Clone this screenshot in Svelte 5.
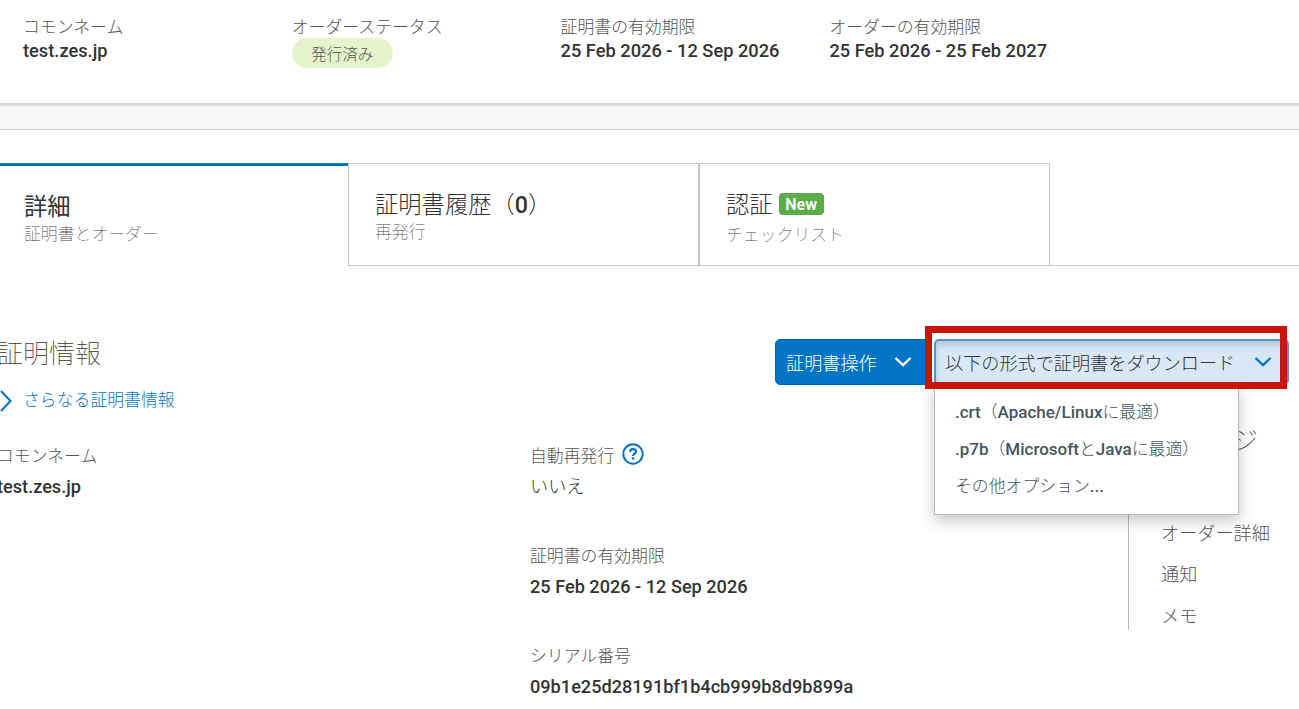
<script lang="ts">
	let menuOpen = $state(true);
	let activeTab = $state('details');

	const commonName = 'test.zes.jp';
	const certValidity = '25 Feb 2026 - 12 Sep 2026';
	const orderValidity = '25 Feb 2026 - 25 Feb 2027';
	const serial = '09b1e25d28191bf1b4cb999b8d9b899a';

	const pageLinks = ['オーダー詳細', '通知', 'メモ'];
</script>

{#snippet chevron()}
	<svg class="chevron" viewBox="0 0 18 12" width="18" height="12" aria-hidden="true">
		<path d="M1.5 2 L9 9.2 L16.5 2" fill="none" stroke="currentColor" stroke-width="2.4" />
	</svg>
{/snippet}

<div class="page">
	<header class="summary">
		<div class="summary-item">
			<span class="summary-label">コモンネーム</span>
			<strong>{commonName}</strong>
		</div>
		<div class="summary-item">
			<span class="summary-label">オーダーステータス</span>
			<span class="status">発行済み</span>
		</div>
		<div class="summary-item">
			<span class="summary-label">証明書の有効期限</span>
			<strong>{certValidity}</strong>
		</div>
		<div class="summary-item">
			<span class="summary-label">オーダーの有効期限</span>
			<strong>{orderValidity}</strong>
		</div>
	</header>
	<div class="band"></div>

	<nav class="tabs">
		<button class="tab first" class:active={activeTab === 'details'} onclick={() => (activeTab = 'details')}>
			<span class="tab-title">詳細</span>
			<span class="tab-sub">証明書とオーダー</span>
		</button>
		<button class="tab" class:active={activeTab === 'history'} onclick={() => (activeTab = 'history')}>
			<span class="tab-title">証明書履歴（<b>0</b>）</span>
			<span class="tab-sub">再発行</span>
		</button>
		<button class="tab last" class:active={activeTab === 'validation'} onclick={() => (activeTab = 'validation')}>
			<span class="tab-title">認証<span class="badge">New</span></span>
			<span class="tab-sub">チェックリスト</span>
		</button>
		<div class="tabs-rest"></div>
	</nav>

	<main class="content">
		<section class="details">
			<div class="details-head">
				<h2>証明情報</h2>
				<div class="actions">
					<button class="btn btn-primary">証明書操作{@render chevron()}</button>
					<div class="download">
						<button class="btn btn-download" onclick={() => (menuOpen = !menuOpen)}>
							以下の形式で証明書をダウンロード{@render chevron()}
						</button>
						{#if menuOpen}
							<ul class="menu">
								<li><b>.crt</b>（<b>Apache/Linux</b>に最適）</li>
								<li><b>.p7b</b>（<b>Microsoft</b>と<b>Java</b>に最適）</li>
								<li>その他オプション<b>...</b></li>
							</ul>
						{/if}
						<div class="highlight"></div>
					</div>
				</div>
			</div>

			<a class="more" href="#more">
				<svg viewBox="0 0 14 22" width="14" height="22" aria-hidden="true">
					<path d="M2 1 L11.5 11 L2 21" fill="none" stroke="currentColor" stroke-width="2" />
				</svg>
				さらなる証明書情報
			</a>

			<div class="fields">
				<dl>
					<dt>コモンネーム</dt>
					<dd>{commonName}</dd>
				</dl>
				<dl>
					<dt>
						自動再発行
						<svg class="help" viewBox="0 0 22 22" width="22" height="22" aria-hidden="true">
							<circle cx="11" cy="11" r="9.7" fill="none" stroke="currentColor" stroke-width="2" />
							<path d="M7.9 8.7 C7.9 5.2 14.1 5.2 14.1 8.5 C14.1 10.6 11.1 10.6 11.1 13" fill="none" stroke="currentColor" stroke-width="2.2" />
							<circle cx="11.1" cy="15.5" r="1.35" fill="currentColor" />
						</svg>
					</dt>
					<dd class="jp">いいえ</dd>
					<dt>証明書の有効期限</dt>
					<dd>{certValidity}</dd>
					<dt>シリアル番号</dt>
					<dd>{serial}</dd>
				</dl>
			</div>
		</section>

		<aside class="sidebar">
			<h3>ジ</h3>
			<ul class="page-links">
				{#each pageLinks as link}
					<li>{link}</li>
				{/each}
			</ul>
		</aside>
	</main>
</div>

<style>
	:global(body) {
		background: #fff;
		overflow: hidden;
	}

	.page {
		width: 1299px;
		height: 709px;
		overflow: hidden;
		font-family: Roboto, 'Noto Sans CJK JP', sans-serif;
		font-weight: 300;
		font-size: 16.85px;
		color: #333;
	}

	button {
		font: inherit;
		color: inherit;
		cursor: pointer;
	}

	ul,
	dl,
	dd,
	h2,
	h3 {
		margin: 0;
		padding: 0;
		list-style: none;
		font-weight: 300;
	}

	.summary {
		display: grid;
		grid-template-columns: repeat(4, 268.8px);
		box-sizing: border-box;
		height: 103px;
		padding: 15px 0 0 23px;
	}

	.summary-item {
		display: flex;
		flex-direction: column;
		align-items: flex-start;
		line-height: 24px;
	}

	.summary-label {
		color: #555;
	}

	.summary strong {
		font-size: 18.25px;
		font-weight: 500;
	}

	.status {
		box-sizing: border-box;
		width: 101px;
		height: 30px;
		margin-top: -1px;
		border-radius: 15px;
		background: #e6f4cb;
		color: #555;
		font-size: 15.5px;
		line-height: 34px;
		text-align: center;
	}

	.band {
		height: 26px;
		border-bottom: 1px solid #ccc;
		background: linear-gradient(#d5d5d5 0, #dcdcdc 2px, #f9f9f9 4px);
	}

	.tabs {
		display: flex;
		height: 103px;
		margin-top: 33px;
	}

	.tab {
		display: flex;
		flex-direction: column;
		box-sizing: border-box;
		width: 351px;
		padding: 27px 26px 0;
		border: 1px solid #c8c8c8;
		background: #fff;
		text-align: left;
	}

	.tab.first {
		width: 348px;
		padding: 27px 24px 0;
		border: 0;
		border-top: 3px solid #0174c3;
	}

	.tab-title {
		display: flex;
		align-items: center;
		height: 28px;
		font-size: 23.3px;
		line-height: 28px;
	}

	.tab.active .tab-title {
		font-weight: 400;
	}

	.tab-title b {
		font-weight: 500;
	}

	.tab-sub {
		color: #444;
		font-weight: 100;
		line-height: 26px;
	}

	.tab.last .tab-sub {
		margin-top: 3px;
	}

	.badge {
		width: 45px;
		height: 22px;
		margin: -2px 0 0 6px;
		border-radius: 4px;
		background: #5bad4b;
		color: #fff;
		font-size: 16px;
		font-weight: 600;
		line-height: 23px;
		text-align: center;
	}

	.tabs-rest {
		flex: 1;
		border-bottom: 1px solid #c8c8c8;
	}

	.content {
		display: flex;
		padding-top: 73px;
	}

	.details {
		width: 1128px;
		flex: none;
	}

	.details-head {
		display: flex;
		width: 1289px;
		height: 46px;
	}

	h2 {
		flex: none;
		width: 775px;
		margin-left: -3px;
		font-size: 26px;
		font-weight: 100;
		line-height: 31px;
	}

	.actions {
		display: flex;
		flex: none;
		gap: 4px;
		margin-left: 3px;
	}

	.btn {
		display: flex;
		align-items: center;
		justify-content: space-between;
		box-sizing: border-box;
		height: 46px;
		border-radius: 5px;
		font-size: 18.15px;
		white-space: nowrap;
	}

	.btn-primary {
		width: 155px;
		padding: 0 17px 0 10px;
		border: 1px solid #0068b3;
		background: #0174c5;
		color: #fff;
	}

	.download {
		position: relative;
	}

	.btn-download {
		width: 355px;
		padding: 0 15px 0 9px;
		border: 2px solid #5793cc;
		background: #d8e8f6;
		box-shadow: inset 0 4px 7px rgba(60, 90, 120, 0.25);
	}

	.btn-download .chevron {
		color: #0174c5;
	}

	.highlight {
		position: absolute;
		top: -13px;
		left: -9px;
		width: 348px;
		height: 49px;
		border: 7px solid #cb1409;
		pointer-events: none;
	}

	.menu {
		position: absolute;
		top: 46px;
		left: 0;
		box-sizing: border-box;
		width: 305px;
		height: 130px;
		padding: 8px 20px;
		border: 1px solid #bbb;
		background: #fff;
		color: #455560;
		box-shadow: 0 6px 14px rgba(0, 0, 0, 0.22);
		line-height: 37px;
		white-space: nowrap;
	}

	.menu b {
		font-size: 17px;
		font-weight: 500;
	}

	.more {
		display: flex;
		align-items: center;
		gap: 10px;
		height: 30px;
		color: #0174c5;
		line-height: 28px;
		text-decoration: none;
	}

	.more svg {
		margin: 1px 0 0 -1px;
	}

	.fields {
		display: flex;
		margin-top: 24px;
	}

	dl:first-child {
		width: 533px;
		margin-left: -3px;
	}

	dt {
		display: flex;
		align-items: center;
		gap: 8px;
		box-sizing: border-box;
		height: 32px;
		padding-bottom: 2px;
		color: #555;
	}

	dd {
		margin-bottom: 36px;
		font-size: 18.15px;
		font-weight: 500;
		line-height: 32px;
	}

	dd.jp {
		font-weight: 300;
	}

	.help {
		color: #0174c5;
	}

	.sidebar {
		box-sizing: border-box;
		width: 171px;
		height: 220px;
		margin-top: 71px;
		padding-left: 32px;
		border-left: 1px solid #bbb;
	}

	h3 {
		padding-left: 71px;
		font-size: 26px;
		font-weight: 100;
		line-height: 62px;
	}

	.page-links {
		margin-top: 41px;
		color: #555;
		font-size: 18.15px;
		line-height: 41.3px;
	}
</style>
